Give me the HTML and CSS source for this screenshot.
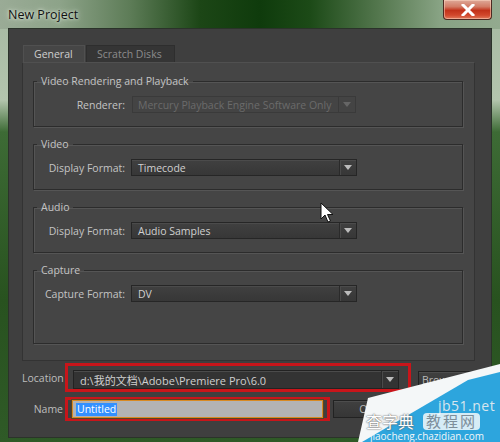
FILE: index.html
```html
<!DOCTYPE html>
<html>
<head>
<meta charset="utf-8">
<link rel="stylesheet" href="styles.css">
</head>
<body>
<div class="window">
  <div class="titlebar">
    <span class="title">New Project</span>
    <div class="close">
      <svg width="14" height="12" viewBox="0 0 14 12"><path d="M2 1 L12 11 M12 1 L2 11" stroke="#fff" stroke-width="3" stroke-linecap="square"/></svg>
    </div>
  </div>
  <div class="client">
    <div class="tabs">
      <div class="tab active">General</div>
      <div class="tab">Scratch Disks</div>
    </div>
    <div class="panel">
      <fieldset class="group">
        <legend>Video Rendering and Playback</legend>
        <div class="row">
          <label>Renderer:</label>
          <div class="select disabled"><span class="val">Mercury Playback Engine Software Only</span><span class="arrow"></span></div>
        </div>
      </fieldset>
      <fieldset class="group">
        <legend>Video</legend>
        <div class="row">
          <label>Display Format:</label>
          <div class="select"><span class="val">Timecode</span><span class="arrow"></span></div>
        </div>
      </fieldset>
      <fieldset class="group">
        <legend>Audio</legend>
        <div class="row">
          <label>Display Format:</label>
          <div class="select"><span class="val">Audio Samples</span><span class="arrow"></span></div>
        </div>
      </fieldset>
      <fieldset class="group tall">
        <legend>Capture</legend>
        <div class="row">
          <label>Capture Format:</label>
          <div class="select"><span class="val">DV</span><span class="arrow"></span></div>
        </div>
      </fieldset>
    </div>
    <div class="bottom">
      <div class="frow loc">
        <label>Location</label>
        <div class="mark mark-loc">
          <div class="select wide"><span class="val">d:\我的文档\Adobe\Premiere Pro\6.0</span><span class="arrow"></span></div>
        </div>
        <div class="btn browse">Browse...</div>
      </div>
      <div class="frow name">
        <label>Name</label>
        <div class="mark mark-name">
          <div class="input"><span class="selected">Untitled</span></div>
        </div>
        <div class="btn ok">OK</div>
      </div>
    </div>
  </div>
  <svg class="cursor" width="14" height="22" viewBox="0 0 14 22"><path d="M1 1 L1 17 L5 13 L8 20 L10.5 19 L7.5 12.5 L13 12.5 Z" fill="#fff" stroke="#111" stroke-width="1"/></svg>
  <div class="watermark">
    <svg class="wm-shape" width="150" height="82" viewBox="0 0 150 82">
      <polygon points="8,82 18,38 150,4 150,82" fill="#f4f7f8"/>
      <polygon points="12,82 118,20 150,12 150,82" fill="#2da5dd"/>
    </svg>
    <span class="wm-site">jb51.net</span>
    <span class="wm-cn1">查字典</span>
    <span class="wm-cn2">教程网</span>
    <span class="wm-url">jiaocheng.chazidian.com</span>
  </div>
</div>
</body>
</html>
```

FILE: styles.css
```css
html, body {
  margin: 0;
  padding: 0;
  background: #1f3a1b;
}
body {
  width: 500px;
  height: 442px;
  overflow: hidden;
  font-family: "Open Sans", "Noto Sans", "Noto Sans CJK SC", sans-serif;
}
.window {
  position: relative;
  width: 500px;
  height: 442px;
  box-sizing: border-box;
  padding: 0 8px 4px 8px;
  display: flex;
  flex-direction: column;
  background:
    linear-gradient(90deg, #9aab96 0%, #8da389 12%, #5d7c57 26%, #1c4616 40%, #0f3b0c 52%, #1c4a17 62%, #55784f 76%, #88a384 88%, #93aa8f 100%) top / 100% 29px no-repeat,
    linear-gradient(180deg, #a5b8a1 0, #b3c5ad 100px, #3d6b35 132px, #28521f 300px, #2f5a27 100%);
}
.titlebar {
  height: 28px;
  display: flex;
  justify-content: space-between;
  align-items: flex-start;
  flex: none;
}
.title {
  margin-top: 6px;
  font-size: 12.5px;
  color: #111;
  text-shadow: 0 0 6px rgba(230, 240, 225, 0.9), 0 0 3px rgba(230, 240, 225, 0.9);
}
.close {
  width: 49px;
  height: 20px;
  box-sizing: border-box;
  border: 1px solid #4d2a22;
  border-top: none;
  border-radius: 0 0 4px 4px;
  background: linear-gradient(180deg, #dea999 0%, #d27c66 35%, #c2321a 55%, #d2482c 80%, #e07a5c 100%);
  box-shadow: inset 0 0 0 1px rgba(255, 220, 200, 0.5);
  display: flex;
  align-items: center;
  justify-content: center;
}
.client {
  height: 410px;
  box-sizing: border-box;
  border: 1px solid #2b332a;
  background: #3f3f3f;
  padding: 16px 16px 0 13px;
}
.tabs {
  display: flex;
  height: 17px;
  margin-left: 1px;
}
.tab {
  height: 17px;
  box-sizing: border-box;
  font-size: 10.5px;
  line-height: 16px;
  color: #8c8c8c;
  background: #353535;
  border: 1px solid #2e2e2e;
  border-bottom: none;
}
.tab.active {
  width: 62px;
  padding-left: 10px;
  color: #cfcfcf;
  background: #464646;
  border-color: #505050;
}
.tab:not(.active) {
  width: 89px;
  padding-left: 10px;
  margin-left: 1px;
}
.panel {
  width: 453px;
  height: 299px;
  box-sizing: border-box;
  border: 1px solid #333;
  border-top-color: #505050;
  background: #454545;
  padding: 11px 11px 0 10px;
}
.group {
  margin: 0 0 10px 0;
  padding: 8px 0 13px 0;
  border: 1px solid #2c2c2c;
  box-shadow: 1px 1px 0 #555, inset 1px 1px 0 #555;
  min-width: 0;
}
.group.tall {
  padding-bottom: 41px;
}
legend {
  margin-left: 3px;
  padding: 0 4px;
  font-size: 10.5px;
  line-height: 14px;
  color: #c4c4c4;
}
.row {
  display: grid;
  grid-template-columns: 91px 226px;
  column-gap: 6px;
  height: 17px;
  align-items: center;
}
.row label {
  text-align: right;
  font-size: 10.5px;
  color: #c4c4c4;
  white-space: nowrap;
}
.select {
  height: 17px;
  box-sizing: border-box;
  display: flex;
  align-items: center;
  border: 1px solid #262626;
  background: linear-gradient(180deg, #404040, #373737);
  box-shadow: inset 0 1px 0 #4b4b4b;
}
.select .val {
  flex: 1;
  padding-left: 6px;
  font-size: 10.5px;
  color: #d0d0d0;
  white-space: nowrap;
  overflow: hidden;
}
.select .arrow {
  width: 17px;
  height: 100%;
  box-sizing: border-box;
  border-left: 1px solid #2a2a2a;
  box-shadow: inset 1px 0 0 #4a4a4a;
  display: flex;
  align-items: center;
  justify-content: center;
}
.select .arrow::after {
  content: "";
  border-left: 4px solid transparent;
  border-right: 4px solid transparent;
  border-top: 5px solid #bcbcbc;
}
.select.disabled {
  margin-left: 1px;
  width: 224px;
  background: #444;
  border-color: #3a3a3a;
  box-shadow: none;
}
.select.disabled .val {
  color: #6b6b6b;
  padding-left: 5px;
}
.select.disabled .arrow {
  border-left-color: #3a3a3a;
  box-shadow: none;
}
.select.disabled .arrow::after {
  border-top-color: #666;
}
.bottom {
  display: flex;
  flex-direction: column;
  gap: 5px;
  margin-top: 2px;
}
.frow {
  display: flex;
  align-items: center;
}
.frow label {
  width: 41px;
  text-align: right;
  font-size: 10.5px;
  color: #bdbdbd;
  margin-right: 2px;
}
.mark {
  box-sizing: border-box;
  border: 3px solid #c8151a;
}
.mark-loc {
  width: 346px;
  height: 29px;
  padding: 4px 9px 0 5px;
}
.select.wide {
  height: 19px;
  background: #333;
  border-color: #222;
}
.select.wide .val {
  padding-left: 6px;
  font-size: 11px;
  color: #cfcfcf;
}
.mark-name {
  width: 265px;
  height: 24px;
  padding: 0 4px;
}
.input {
  height: 18px;
  box-sizing: border-box;
  border: 1px solid #d88a22;
  box-shadow: 0 0 0 1px #5a4320;
  background: #b3b3b3;
  display: flex;
  align-items: center;
  padding-left: 3px;
}
.selected {
  background: #3390ff;
  color: #fff;
  font-size: 10.5px;
  line-height: 13px;
  padding: 0 1px;
}
.btn {
  height: 18px;
  box-sizing: border-box;
  border: 1px solid #222;
  background: linear-gradient(180deg, #404040, #363636);
  box-shadow: inset 0 1px 0 #4d4d4d;
  font-size: 10.5px;
  line-height: 16px;
  color: #bbb;
}
.browse {
  width: 57px;
  margin-left: 7px;
  margin-top: 4px;
  padding-left: 3px;
}
.ok {
  width: 67px;
  margin-left: 3px;
  text-align: center;
}
.cursor {
  position: absolute;
  left: 320px;
  top: 202px;
}
.watermark {
  position: absolute;
  left: 350px;
  top: 360px;
  width: 150px;
  height: 82px;
}
.wm-shape {
  position: absolute;
  left: 0;
  top: 0;
}
.wm-site {
  position: absolute;
  left: 88px;
  top: 40px;
  font-size: 14px;
  line-height: 12px;
  color: #d8e6ee;
  letter-spacing: 0.5px;
}
.wm-cn1 {
  position: absolute;
  left: 16px;
  top: 55px;
  font-size: 16px;
  line-height: 15px;
  color: #fff;
  text-shadow: 0 0 2px #666, 0 0 1px #666;
}
.wm-cn2 {
  position: absolute;
  left: 73px;
  top: 53px;
  padding: 0 3px;
  font-size: 15px;
  line-height: 17px;
  color: #7d8e9a;
  background: rgba(245, 248, 250, 0.85);
  border-radius: 4px;
  letter-spacing: 2px;
}
.wm-url {
  position: absolute;
  left: 20px;
  top: 71px;
  font-size: 10px;
  line-height: 10px;
  color: #f2f6f8;
}
```
